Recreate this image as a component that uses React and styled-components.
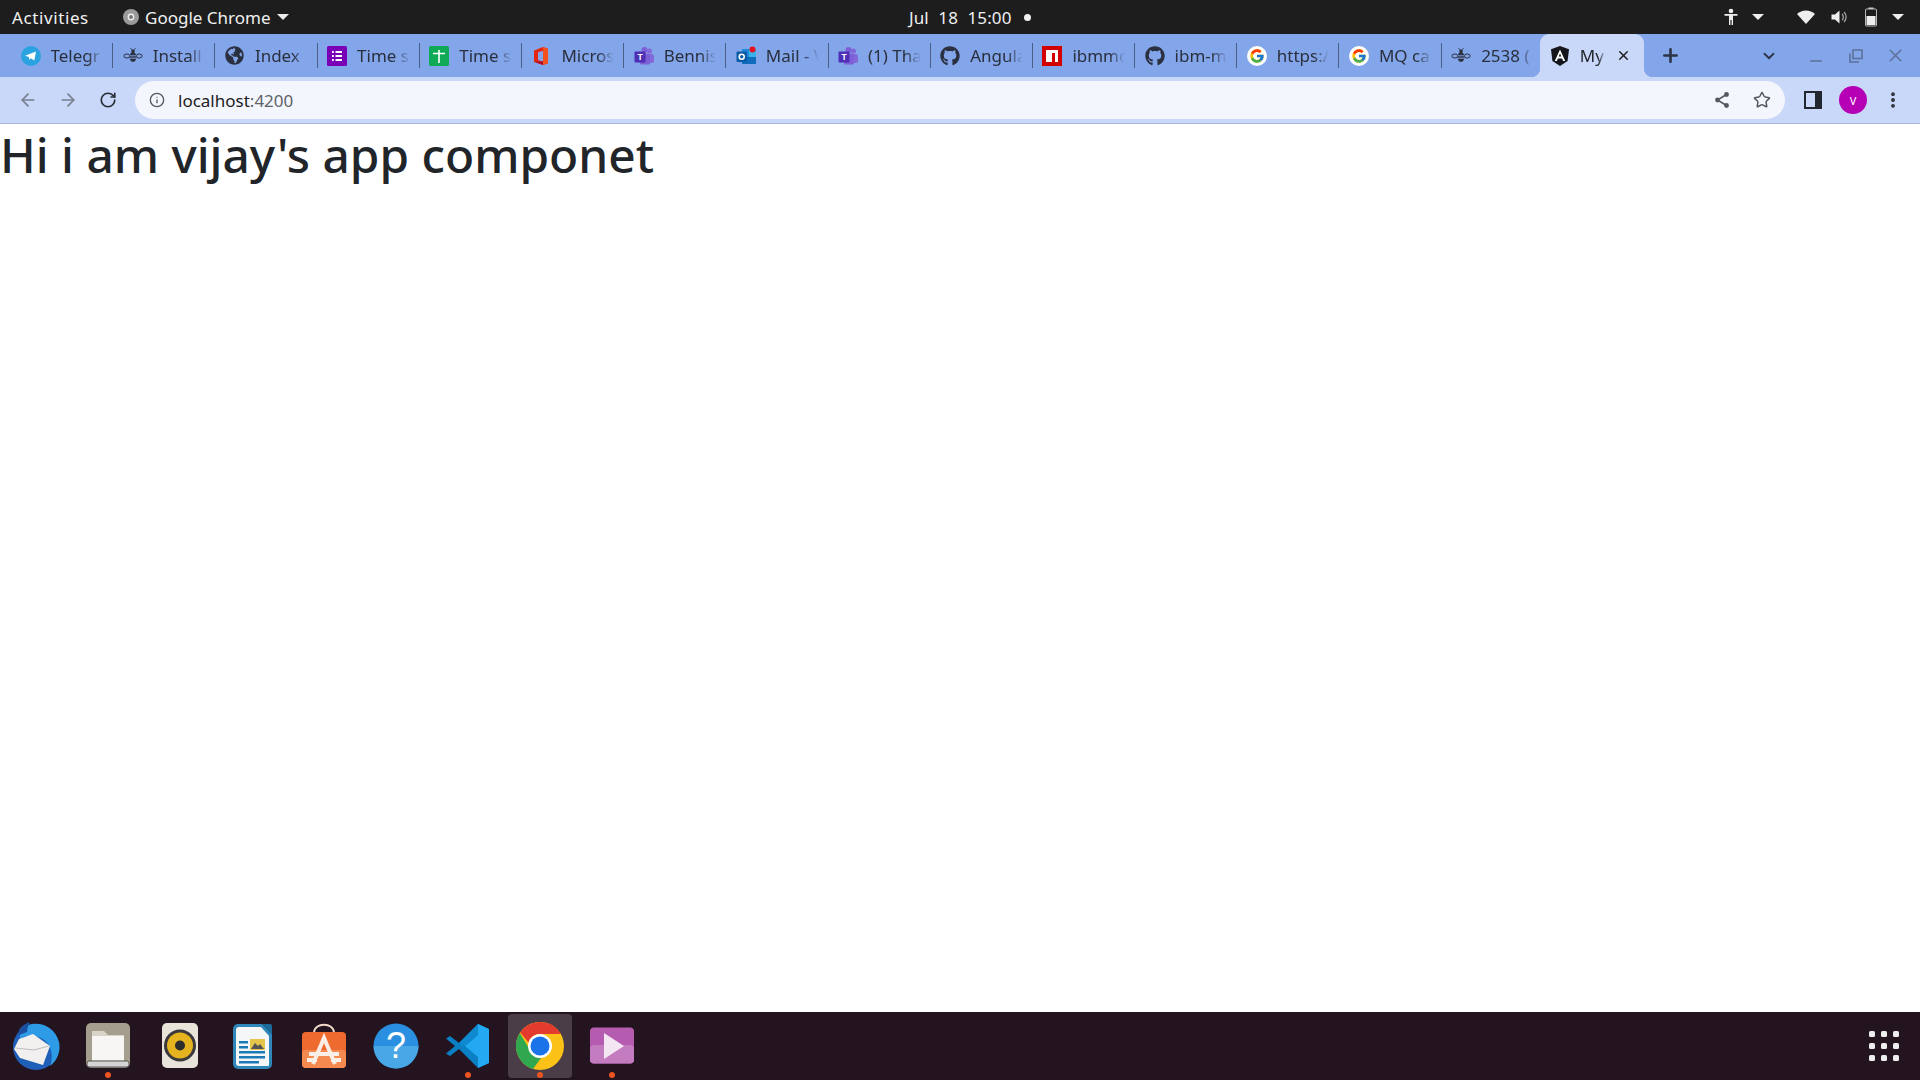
import React from 'react';
import styled, { createGlobalStyle } from 'styled-components';
import { ArrowLeft, ArrowRight, RotateCw, Info, Star, Plus, ChevronDown, X, Minus, MoreVertical } from 'lucide-react';
import { FaGithub, FaGlobeAmericas } from 'react-icons/fa';
import { FcGoogle } from 'react-icons/fc';

const Global = createGlobalStyle`
  html, body { margin: 0; padding: 0; background: #fff; overflow: hidden; }
  * { box-sizing: border-box; }
  body { font-family: "Noto Sans", "Open Sans", sans-serif; }
`;

const Page = styled.div`
  display: flex;
  flex-direction: column;
  width: 1920px;
  height: 1080px;
`;

/* ---------- GNOME top bar ---------- */
const TopBar = styled.header`
  display: flex;
  align-items: center;
  height: 34px;
  padding: 0 14px 0 12px;
  background: #1d1d1d;
  color: #f0f0f0;
  font-size: 17px;
  flex: none;
`;
const Activities = styled.span`
  width: 111px;
  letter-spacing: 0.6px;
`;
const AppMenu = styled.div`
  display: flex;
  align-items: center;
  gap: 6px;
  width: 786px;
`;
const Clock = styled.div`
  display: flex;
  align-items: center;
  gap: 13px;
  word-spacing: 5px;
  letter-spacing: 0.1px;
`;
const Dot = styled.span`
  width: 7px;
  height: 7px;
  border-radius: 50%;
  background: #f0f0f0;
`;
const Tray = styled.div`
  display: flex;
  align-items: center;
  margin-left: auto;
`;
const TrayItem = styled.span`
  display: flex;
  justify-content: center;
  align-items: center;
  width: ${p => p.$w}px;
  margin-left: ${p => p.$ml || 0}px;
`;
const Caret = styled.span`
  display: inline-block;
  width: 0;
  height: 0;
  border-left: 6px solid transparent;
  border-right: 6px solid transparent;
  border-top: 6px solid #eee;
`;

/* ---------- Tab strip ---------- */
const TabStrip = styled.div`
  display: flex;
  align-items: stretch;
  height: 43px;
  padding-left: 11px;
  background: #83a5ea;
  flex: none;
`;
const Tab = styled.div`
  position: relative;
  display: flex;
  align-items: center;
  gap: 10px;
  width: 102.2px;
  padding: 0 10px 0 9.5px;
  color: #2a2f3d;
  font-size: 17px;
  flex: none;
  &::after {
    content: '';
    display: ${p => (p.$noSep ? 'none' : 'block')};
    position: absolute;
    right: 0;
    top: 9px;
    height: 25px;
    width: 1px;
    background: #4a5e87;
  }
`;
const ActiveTab = styled.div`
  position: relative;
  display: flex;
  align-items: center;
  gap: 10px;
  width: 104px;
  margin-left: -4px;
  padding: 0 13px 0 10px;
  background: #c9d8f8;
  border-radius: 9px 9px 0 0;
  color: #23262e;
  font-size: 17px;
  flex: none;
  &::before, &::after {
    content: '';
    position: absolute;
    bottom: 0;
    width: 9px;
    height: 9px;
  }
  &::before {
    left: -9px;
    background: radial-gradient(circle at 0 0, transparent 9px, #c9d8f8 9.5px);
  }
  &::after {
    right: -9px;
    background: radial-gradient(circle at 100% 0, transparent 9px, #c9d8f8 9.5px);
  }
`;
const Favicon = styled.span`
  display: flex;
  align-items: center;
  justify-content: center;
  width: 20px;
  height: 20px;
  flex: none;
`;
const GoogleBadge = styled.span`
  display: flex;
  padding: 2px;
  background: #fff;
  border-radius: 50%;
`;
const TabLabel = styled.span`
  flex: 1;
  min-width: 0;
  overflow: hidden;
  white-space: nowrap;
  -webkit-mask-image: linear-gradient(to right, #000 70%, transparent 100%);
  mask-image: linear-gradient(to right, #000 70%, transparent 100%);
`;
const CloseTab = styled.span`
  display: flex;
  align-items: center;
  color: #222;
  flex: none;
`;
const StripButton = styled.span`
  display: flex;
  align-items: center;
  justify-content: center;
  width: ${p => p.$w}px;
  color: ${p => p.$c || '#2b3446'};
  margin-left: ${p => p.$ml || 0}px;
  padding-top: ${p => p.$pt || 0}px;
  flex: none;
`;

/* ---------- Toolbar ---------- */
const Toolbar = styled.div`
  display: flex;
  align-items: center;
  height: 47px;
  padding: 0 0 0 8px;
  background: #c9d8f8;
  border-bottom: 1px solid #a9b8da;
  flex: none;
`;
const NavButton = styled.span`
  display: flex;
  align-items: center;
  justify-content: center;
  width: ${p => p.$w || 40}px;
  margin-left: ${p => p.$ml || 0}px;
  color: ${p => p.$c || '#777f8e'};
  flex: none;
`;
const Omnibox = styled.div`
  display: flex;
  align-items: center;
  width: 1650px;
  height: 38px;
  margin-left: 7px;
  padding: 0 0 0 12px;
  background: #f3f6fc;
  border-radius: 19px;
  flex: none;
`;
const Url = styled.span`
  margin-left: 11px;
  font-size: 17px;
  color: #1f2024;
`;
const Port = styled.span`
  color: #5f6368;
`;
const OmniActions = styled.div`
  display: flex;
  align-items: center;
  margin-left: auto;
  padding-right: 3px;
`;
const Avatar = styled.span`
  display: flex;
  align-items: center;
  justify-content: center;
  width: 28px;
  height: 28px;
  margin: 0 12px 0 6px;
  border-radius: 50%;
  background: #b500b5;
  color: #fff;
  font-size: 11px;
  flex: none;
`;

/* ---------- Page content ---------- */
const Main = styled.main`
  flex: 1;
  padding-top: 2px;
  background: #fff;
`;
const Heading = styled.h1`
  margin: 0;
  font-size: 47.8px;
  line-height: 1.2;
  font-weight: 500;
  color: #212529;
`;

/* ---------- Dock ---------- */
const Dock = styled.footer`
  display: flex;
  align-items: stretch;
  height: 68px;
  background: #231420;
  flex: none;
`;
const DockItem = styled.div`
  position: relative;
  display: flex;
  align-items: center;
  justify-content: center;
  width: 72px;
  flex: none;
  &::before {
    content: '';
    display: ${p => (p.$active ? 'block' : 'none')};
    position: absolute;
    left: 4px;
    right: 4px;
    top: 2px;
    bottom: 2px;
    border-radius: 4px;
    background: #4a3d47;
  }
  &::after {
    content: '';
    display: ${p => (p.$running ? 'block' : 'none')};
    position: absolute;
    left: 33px;
    bottom: 2px;
    width: 6px;
    height: 6px;
    border-radius: 50%;
    background: #e95420;
  }
  svg { position: relative; }
`;
const AppGrid = styled.div`
  display: grid;
  grid-template-columns: repeat(3, 6px);
  gap: 6px;
  align-content: center;
  margin-left: auto;
  margin-right: 21px;
`;
const GridDot = styled.span`
  width: 6px;
  height: 6px;
  border-radius: 1.5px;
  background: #eee;
`;

/* ---------- Icons ---------- */
const Svg = ({ s = 20, v = 20, children }) => (
  <svg width={s} height={s} viewBox={`0 0 ${v} ${v}`}>{children}</svg>
);
const Telegram = () => (
  <Svg>
    <circle cx="10" cy="10" r="10" fill="#2aa3e0" />
    <path d="M4 9.8 15 5.5 13.3 14.6 9.8 12.2 8.2 13.8 7.8 11z" fill="#fff" />
  </Svg>
);
const Bee = () => (
  <Svg>
    <g fill="none" stroke="#2b3040" strokeWidth="1">
      <ellipse cx="3.8" cy="10" rx="3" ry="2" />
      <ellipse cx="16.2" cy="10" rx="3" ry="2" />
    </g>
    <ellipse cx="10" cy="11" rx="3.4" ry="5" fill="#2b3040" />
    <path d="M6.6 9.8h6.8M6.6 12.2h6.8" stroke="#83a5ea" strokeWidth="1" />
    <circle cx="10" cy="5" r="1.8" fill="#2b3040" />
    <path d="M8.5 3.5 7.5 2M11.5 3.5 12.5 2" stroke="#2b3040" strokeWidth="0.8" />
  </Svg>
);
const Forms = () => (
  <Svg>
    <rect width="20" height="20" rx="1.5" fill="#7a00b8" />
    <path d="M5 6h1.8M8.5 6H15M5 10h1.8M8.5 10H15M5 14h1.8M8.5 14H15" stroke="#fff" strokeWidth="1.8" />
  </Svg>
);
const Sheets = () => (
  <Svg>
    <rect width="20" height="20" rx="1.5" fill="#0fa958" />
    <path d="M4 7.5h12M10 4v13" stroke="#fff" strokeWidth="1.6" />
  </Svg>
);
const Office = () => (
  <Svg>
    <path d="M3 4.5 12 1l5 1.8v14.4L12 19l-9-3.3z" fill="#e5260f" />
    <path d="M12 1 17 2.8V17.2L12 19z" fill="#f4511e" />
    <path d="M7 6.2 12 4.8V15.4L7 14z" fill="#83a5ea" />
    <path d="M3 15.7 12 15.4V19z" fill="#a8102a" />
  </Svg>
);
const Teams = () => (
  <Svg>
    <circle cx="15.5" cy="5" r="2.5" fill="#8268d8" />
    <rect x="12" y="8" width="8" height="9" rx="2.5" fill="#8268d8" />
    <circle cx="10.5" cy="4" r="3" fill="#7d5fd6" />
    <rect x="6" y="7.5" width="10" height="11" rx="1.5" fill="#7d5fd6" />
    <rect x="0.5" y="5.5" width="11" height="11" rx="1" fill="#4e2fb5" />
    <text x="6" y="14" textAnchor="middle" fontSize="8.5" fontWeight="700" fill="#fff" fontFamily="Liberation Sans">T</text>
  </Svg>
);
const Outlook = () => (
  <Svg>
    <rect x="6" y="3" width="14" height="15" rx="1" fill="#1e88d8" />
    <path d="M6 11h14v6a1 1 0 0 1-1 1H7a1 1 0 0 1-1-1z" fill="#0f6cbd" />
    <rect x="13" y="3" width="7" height="8" fill="#38b3ea" />
    <rect x="0.5" y="5.5" width="10.5" height="10.5" rx="1" fill="#0a5aa8" />
    <circle cx="5.7" cy="10.7" r="2.5" fill="none" stroke="#fff" strokeWidth="1.5" />
    <circle cx="16.5" cy="3.5" r="3" fill="#e81123" />
  </Svg>
);
const Npm = () => (
  <Svg>
    <rect width="20" height="20" fill="#d40000" />
    <path d="M4 4h12v12h-3V7h-3v9H4z" fill="#fff" />
  </Svg>
);
const Angular = () => (
  <Svg>
    <path d="M10 0 1 3.2 2.4 15 10 20l7.6-5L19 3.2z" fill="#14161c" />
    <path d="M10 3.4 4.8 15h2.1l1-2.6h4.2l1 2.6h2.1zM8.7 10.6 10 7.4l1.3 3.2z" fill="#fff" />
  </Svg>
);
const ChromeMini = () => (
  <Svg s={16} v={16}>
    <circle cx="8" cy="8" r="8" fill="#9a9a9a" />
    <circle cx="8" cy="8" r="3.4" fill="#eee" />
    <circle cx="8" cy="8" r="2" fill="#777" />
  </Svg>
);
const Person = () => (
  <Svg s={18} v={18}>
    <circle cx="9" cy="3" r="2.3" fill="#eee" />
    <path d="M2.5 6h13v1.8H11V17H9.6v-5H8.4v5H7V7.8H2.5z" fill="#eee" />
  </Svg>
);
const Wifi = () => (
  <Svg s={20} v={20}>
    <path d="M1 7a13 13 0 0 1 18 0L10 17z" fill="#eee" />
  </Svg>
);
const Speaker = () => (
  <Svg s={18} v={18}>
    <path d="M1.5 6.5h3.5L9.5 2.5v13L5 11.5H1.5z" fill="#eee" />
    <path d="M12 6a4 4 0 0 1 0 6M14 4a7 7 0 0 1 0 10" fill="none" stroke="#aaa" strokeWidth="1.2" />
  </Svg>
);
const Battery = () => (
  <Svg s={20} v={20}>
    <rect x="4.5" y="2" width="11" height="17" rx="1" fill="none" stroke="#bbb" strokeWidth="1" />
    <rect x="7.5" y="0.5" width="5" height="1.5" fill="#ccc" />
    <rect x="5.5" y="9" width="9" height="9" fill="#eee" />
  </Svg>
);
const SidePanel = () => (
  <Svg s={20} v={20}>
    <rect x="1" y="1" width="18" height="18" fill="#22262e" />
    <rect x="3" y="3" width="9" height="14" fill="#c9d8f8" />
  </Svg>
);
const Restore = () => (
  <Svg s={18} v={18}>
    <path d="M6 3h9v8.5H6zM3 6.5v8.5h9" fill="none" stroke="#5d7199" strokeWidth="1.6" />
  </Svg>
);
const ShareNodes = () => (
  <Svg s={18} v={18}>
    <path d="M13.5 3.5 4.5 9l9 5.5" fill="none" stroke="#55585e" strokeWidth="1.6" />
    <circle cx="13.5" cy="3.5" r="2.4" fill="#55585e" />
    <circle cx="4.5" cy="9" r="2.4" fill="#55585e" />
    <circle cx="13.5" cy="14.5" r="2.4" fill="#55585e" />
  </Svg>
);

const Thunderbird = () => (
  <Svg s={50} v={50}>
    <circle cx="25" cy="26" r="23" fill="#1f5fb8" />
    <path d="M9 9C19-2 43 1 48 21c2 10-2 19-9 24 4-10 2-25-12-29C21 14 14 14 9 18z" fill="#2d9be6" />
    <path d="M8 14C6 7 13 3 19 1c-2 4-3 7-3 10z" fill="#1a4fa0" />
    <path d="M3 28 8 18 22 13 39 25 32 44 9 37z" fill="#f1f0ef" />
    <path d="M4 27 23 29 38 25" fill="none" stroke="#bdbdc2" strokeWidth="1" />
  </Svg>
);
const Files = () => (
  <Svg s={46} v={46}>
    <rect x="1" y="0" width="44" height="45" rx="5" fill="#a59e8e" />
    <path d="M7 8h12l4 4h16v28H7z" fill="#d8d4c8" />
    <path d="M7 13h32v24H7z" fill="#f7f6f4" />
    <rect x="2" y="38" width="42" height="6" rx="2" fill="#d4d4d4" stroke="#3a3a3a" strokeWidth="0.8" />
  </Svg>
);
const Rhythmbox = () => (
  <Svg s={46} v={46}>
    <rect x="5" y="0" width="36" height="45" rx="5" fill="#e8e4da" />
    <circle cx="23" cy="22.5" r="16" fill="#3a3a3c" />
    <circle cx="23" cy="22.5" r="13" fill="#e6b320" />
    <circle cx="23" cy="22.5" r="5" fill="#2c2c2c" />
  </Svg>
);
const Writer = () => (
  <Svg s={46} v={46}>
    <path d="M4 6a5 5 0 0 1 5-5h24l10 10v30a5 5 0 0 1-5 5H9a5 5 0 0 1-5-5z" fill="#2f86b8" />
    <path d="M7 7a3 3 0 0 1 3-3h22l8 9v29a1 1 0 0 1-1 1H10a3 3 0 0 1-3-3z" fill="#f4f6f8" />
    <path d="M33 1h8a2 2 0 0 1 2 2v9z" fill="#1b6a99" />
    <path d="M10 18h9v2.5h-9zM10 23h9v2.5h-9zM10 28h26v2.5H10zM10 33h26v2.5H10zM10 38h20v2.5H10z" fill="#1c7ab5" />
    <rect x="21" y="16" width="15" height="11" fill="#e6c64a" />
    <path d="M22 26l4-6 3 3 2-2 4 5z" fill="#555" />
  </Svg>
);
const SoftwareStore = () => (
  <Svg s={46} v={46}>
    <path d="M13 10c0-11 20-11 20 0" fill="none" stroke="#f3d9c6" strokeWidth="2" />
    <rect x="1" y="9" width="44" height="36" rx="4" fill="#ee6a2f" />
    <rect x="1" y="27" width="44" height="18" rx="4" fill="#f58a50" />
    <path d="M12 41 23 15l11 26M8 31h30M6 37h10M30 37h10" fill="none" stroke="#fbeee6" strokeWidth="4" />
  </Svg>
);
const Help = () => (
  <Svg s={46} v={46}>
    <circle cx="23" cy="23" r="22.5" fill="#2a8fe0" />
    <path d="M.5 23h45a22.5 22.5 0 0 1-45 0z" fill="#49a7e6" />
    <text x="23" y="35" textAnchor="middle" fontSize="36" fill="#fff" fontFamily="Liberation Sans">?</text>
  </Svg>
);
const VSCode = () => (
  <Svg s={46} v={46}>
    <path d="M33 1 44 6v34l-11 5L14 26 5 33l-4-2.5L10 23 1 15.5 5 13l9 7z" fill="#0a7fc4" />
    <path d="M33 1 44 6v34l-11 5zM33 12 20 23l13 11z" fill="#23a9f2" fillRule="evenodd" />
    <path d="M33 1v11L20 23l-6-3z" fill="#0f8ad0" />
  </Svg>
);
const Chrome = () => (
  <Svg s={48} v={48}>
    <circle cx="24" cy="24" r="24" fill="#fbc116" />
    <path d="M24 0a24 24 0 0 1 20.8 12H24a12 12 0 0 0-11.5 8.5L4.2 10.5A24 24 0 0 1 24 0z" fill="#e33b2e" />
    <path d="M3.8 11 14 28a12 12 0 0 0 11 8L17 47A24 24 0 0 1 3.8 11z" fill="#2fa84f" />
    <circle cx="24" cy="24" r="12" fill="#fff" />
    <circle cx="24" cy="24" r="9.5" fill="#1a73e8" />
  </Svg>
);
const Videos = () => (
  <Svg s={46} v={46}>
    <rect x="1" y="4.5" width="44" height="36" rx="4" fill="#b65cb0" />
    <rect x="1" y="22" width="44" height="18.5" rx="4" fill="#c47cc0" />
    <path d="M15 10v26l20-13z" fill="#f4e6f2" />
  </Svg>
);

const GoogleIcon = () => <GoogleBadge><FcGoogle size={16} /></GoogleBadge>;

const tabs = [
  [<Telegram />, 'Telegr'],
  [<Bee />, 'Install'],
  [<FaGlobeAmericas size={19} color="#2b3040" />, 'Index'],
  [<Forms />, 'Time s'],
  [<Sheets />, 'Time s'],
  [<Office />, 'Micros'],
  [<Teams />, 'Bennis'],
  [<Outlook />, 'Mail - V'],
  [<Teams />, '(1) Tha'],
  [<FaGithub size={20} color="#2b3040" />, 'Angula'],
  [<Npm />, 'ibmmc'],
  [<FaGithub size={20} color="#2b3040" />, 'ibm-m'],
  [<GoogleIcon />, 'https:/'],
  [<GoogleIcon />, 'MQ ca'],
  [<Bee />, '2538 ('],
];

const dockApps = [
  { icon: <Thunderbird /> },
  { icon: <Files />, running: true },
  { icon: <Rhythmbox /> },
  { icon: <Writer /> },
  { icon: <SoftwareStore /> },
  { icon: <Help /> },
  { icon: <VSCode />, running: true },
  { icon: <Chrome />, running: true, active: true },
  { icon: <Videos />, running: true },
];

export default function App() {
  return (
    <Page>
      <Global />
      <TopBar>
        <Activities>Activities</Activities>
        <AppMenu>
          <ChromeMini />
          <span>Google Chrome</span>
          <Caret />
        </AppMenu>
        <Clock>
          <span>Jul 18 15:00</span>
          <Dot />
        </Clock>
        <Tray>
          <TrayItem $w={24}><Person /></TrayItem>
          <TrayItem $w={30}><Caret /></TrayItem>
          <TrayItem $w={40} $ml={13}><Wifi /></TrayItem>
          <TrayItem $w={26}><Speaker /></TrayItem>
          <TrayItem $w={38}><Battery /></TrayItem>
          <TrayItem $w={16}><Caret /></TrayItem>
        </Tray>
      </TopBar>

      <TabStrip>
        {tabs.map(([icon, label], i) => (
          <Tab key={i} $noSep={i === tabs.length - 1}>
            <Favicon>{icon}</Favicon>
            <TabLabel>{label}</TabLabel>
          </Tab>
        ))}
        <ActiveTab>
          <Favicon><Angular /></Favicon>
          <TabLabel>My</TabLabel>
          <CloseTab><X size={15} strokeWidth={2.4} /></CloseTab>
        </ActiveTab>
        <StripButton $w={34} $ml={10}><Plus size={21} strokeWidth={3} /></StripButton>
        <StripButton $w={28} $ml={67}><ChevronDown size={18} strokeWidth={2.4} /></StripButton>
        <StripButton $w={40} $ml={13} $c="#5d7199" $pt={10}><Minus size={18} strokeWidth={2} /></StripButton>
        <StripButton $w={40} $c="#5d7199"><Restore /></StripButton>
        <StripButton $w={40} $c="#5d7199"><X size={21} strokeWidth={1.8} /></StripButton>
      </TabStrip>

      <Toolbar>
        <NavButton><ArrowLeft size={20} /></NavButton>
        <NavButton><ArrowRight size={20} /></NavButton>
        <NavButton $c="#2a2d33"><RotateCw size={18} strokeWidth={2.2} /></NavButton>
        <Omnibox>
          <NavButton $w={20} $c="#55585e"><Info size={16} /></NavButton>
          <Url>localhost<Port>:4200</Port></Url>
          <OmniActions>
            <NavButton $w={40}><ShareNodes /></NavButton>
            <NavButton $w={40} $c="#55585e"><Star size={18} /></NavButton>
          </OmniActions>
        </Omnibox>
        <NavButton $w={40} $c="#22262e" $ml={8}><SidePanel /></NavButton>
        <Avatar>V</Avatar>
        <NavButton $w={28} $c="#2a2d33"><MoreVertical size={20} strokeWidth={2.6} /></NavButton>
      </Toolbar>

      <Main>
        <Heading>Hi i am vijay's app componet</Heading>
      </Main>

      <Dock>
        {dockApps.map((app, i) => (
          <DockItem key={i} $running={app.running} $active={app.active}>{app.icon}</DockItem>
        ))}
        <AppGrid>
          {Array.from({ length: 9 }, (_, i) => <GridDot key={i} />)}
        </AppGrid>
      </Dock>
    </Page>
  );
}
